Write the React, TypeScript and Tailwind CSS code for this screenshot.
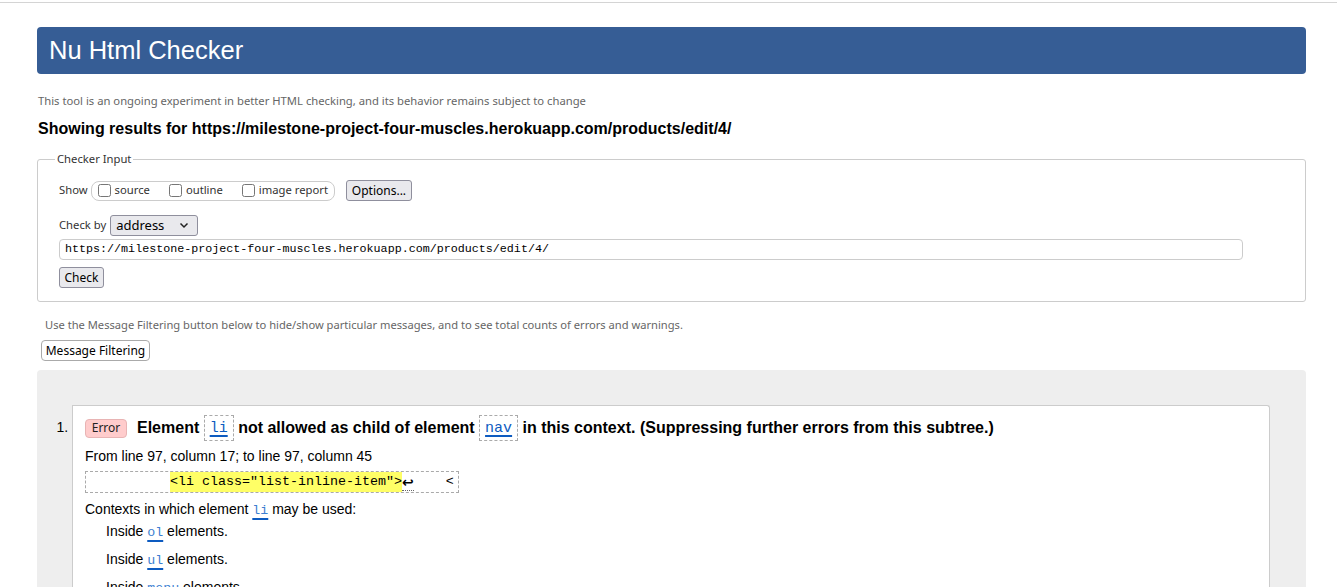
import React from "react";

const ui = "font-['Noto_Sans',sans-serif]";
const mono = "font-['Liberation_Mono',monospace]";

function CodeRef({ children }: { children: React.ReactNode }) {
  return (
    <span className="inline-block border border-dashed border-[#aaa] px-[5px] leading-[22px] align-middle">
      <code className={`${mono} text-[15px] font-normal text-[#0d5bc0] underline decoration-[#0d5bc0] underline-offset-[3px] decoration-[2px]`}>
        {children}
      </code>
    </span>
  );
}

function InlineRef({ children }: { children: React.ReactNode }) {
  return (
    <code className={`${mono} text-[13.3px] leading-none text-[#3d7fd1] underline decoration-[#0d5bc0] underline-offset-[4px] decoration-[1.5px]`}>
      {children}
    </code>
  );
}

export default function App() {
  return (
    <div className="h-[587px] overflow-hidden bg-white font-['Liberation_Sans',Arial,sans-serif] text-black">
      <div className="mt-[2px] h-px bg-[#d4d4d4]" />
      <div className="ml-[37px] mr-[31px]">
        <div className="mt-[24px] flex h-[47px] items-center rounded-[4px] bg-[#365d95] pl-[12px]">
          <h1 className="text-[25.5px] leading-none text-white">Nu Html Checker</h1>
        </div>

        <p className={`${ui} mt-[20px] pl-px text-[11.25px] leading-[14px] text-[#666]`}>
          This tool is an ongoing experiment in better HTML checking, and its behavior remains subject to change
        </p>

        <h2 className="mt-[11px] pl-px text-[16px] font-bold leading-[20px]">
          Showing results for https://milestone-project-four-muscles.herokuapp.com/products/edit/4/
        </h2>

        <fieldset className="mt-[13px] rounded-[3px] border border-[#ccc] px-[21px] pb-[13px]">
          <legend className={`${ui} -ml-[4px] px-[2px] text-[11.25px] leading-[14px] text-[#333]`}>Checker Input</legend>

          <div className={`${ui} mt-[14px] flex h-[21px] items-center text-[11.25px] text-[#333]`}>
            <span>Show</span>
            <div className="ml-[3px] flex h-[20px] items-center gap-[19px] rounded-[8px] border border-[#ccc] pl-[6px] pr-[6px]">
              <label className="flex items-center gap-[4px]">
                <input type="checkbox" className="m-0 h-[13px] w-[13px]" readOnly />
                <span>source</span>
              </label>
              <label className="flex items-center gap-[4px]">
                <input type="checkbox" className="m-0 h-[13px] w-[13px]" readOnly />
                <span>outline</span>
              </label>
              <label className="flex items-center gap-[4px]">
                <input type="checkbox" className="m-0 h-[13px] w-[13px]" readOnly />
                <span>image report</span>
              </label>
            </div>
            <button className="ml-[11px] flex h-[21px] w-[66px] items-center justify-center rounded-[3px] border border-[#8f8f9d] bg-[#e9e9ed] text-[12px] text-black">
              Options...
            </button>
          </div>

          <div className={`${ui} mt-[14px] flex h-[21px] items-center text-[11.25px] text-[#333]`}>
            <span>Check by</span>
            <div className="ml-[4px] flex h-[21px] w-[88px] items-center justify-between rounded-[3px] border border-[#8f8f9d] bg-[#e9e9ed] pl-[5px] pr-[8px] text-[13px] text-black">
              <span>address</span>
              <svg width="10" height="7" viewBox="0 0 10 7" fill="none">
                <path d="M1.5 1.5 L5 5 L8.5 1.5" stroke="#222" strokeWidth="1.5" />
              </svg>
            </div>
          </div>

          <div className={`${mono} mt-[3px] flex h-[21px] w-[1184px] items-center rounded-[4px] border border-[#ccc] pl-[5px] text-[11.7px] text-black`}>
            https://milestone-project-four-muscles.herokuapp.com/products/edit/4/
          </div>

          <button className={`${ui} mt-[7px] flex h-[21px] w-[45px] items-center justify-center rounded-[3px] border border-[#8f8f9d] bg-[#e9e9ed] text-[12px] text-black`}>
            Check
          </button>
        </fieldset>

        <p className={`${ui} ml-[8px] mt-[16px] text-[11.15px] leading-[14px] text-[#666]`}>
          Use the Message Filtering button below to hide/show particular messages, and to see total counts of errors and warnings.
        </p>

        <button className={`${ui} ml-[4px] mt-[8px] flex h-[21px] w-[109px] items-center justify-center rounded-[4px] border border-[#aaa] bg-white text-[12px] text-black`}>
          Message Filtering
        </button>

        <div className="mt-[9px] h-[300px] rounded-t-[4px] bg-[#eeeeee] pl-[35px] pr-[36px] pt-[35px]">
          <ol className="list-decimal text-[14px]">
            <li className="h-[300px] rounded-tr-[3px] border border-b-0 border-[#ccc] bg-white pl-[12px] pt-[9px] marker:text-[14px]">
              <p className="flex items-center text-[16px] font-bold leading-[26px]">
                <span className={`${ui} mr-[10px] flex h-[19px] w-[42px] items-center justify-center rounded-[4px] border border-[#e8b4b4] bg-[#ffcccc] text-[12px] font-normal text-[#222]`}>
                  Error
                </span>
                <span>Element&nbsp;</span>
                <CodeRef>li</CodeRef>
                <span>&nbsp;not allowed as child of element&nbsp;</span>
                <CodeRef>nav</CodeRef>
                <span>&nbsp;in this context. (Suppressing further errors from this subtree.)</span>
              </p>
              <p className="mt-[6px] text-[14px] leading-[18px]">
                From line 97, column 17; to line 97, column 45
              </p>
              <div className={`${mono} mt-[6px] flex h-[22px] w-[374px] items-center border border-dashed border-[#aaa] pl-[4px] text-[13.33px] whitespace-pre`}>
                <span>{"          "}</span>
                <span className="bg-[#ffff66]">{'<li class="list-inline-item">'}</span>
                <span className="border-b border-dotted border-[#666] font-['DejaVu_Sans',sans-serif] text-[14px] font-bold leading-[16px]">↩</span>
                <span>{"    <"}</span>
              </div>
              <p className="mt-[7px] text-[14px] leading-[18px]">
                Contexts in which element <InlineRef>li</InlineRef> may be used:
              </p>
              <div className="pl-[21px]">
                <p className="mt-[4px] text-[14px] leading-[18px]">
                  Inside <InlineRef>ol</InlineRef> elements.
                </p>
                <p className="mt-[10px] text-[14px] leading-[18px]">
                  Inside <InlineRef>ul</InlineRef> elements.
                </p>
                <p className="mt-[10px] text-[14px] leading-[18px]">
                  Inside <InlineRef>menu</InlineRef> elements.
                </p>
              </div>
            </li>
          </ol>
        </div>
      </div>
    </div>
  );
}
